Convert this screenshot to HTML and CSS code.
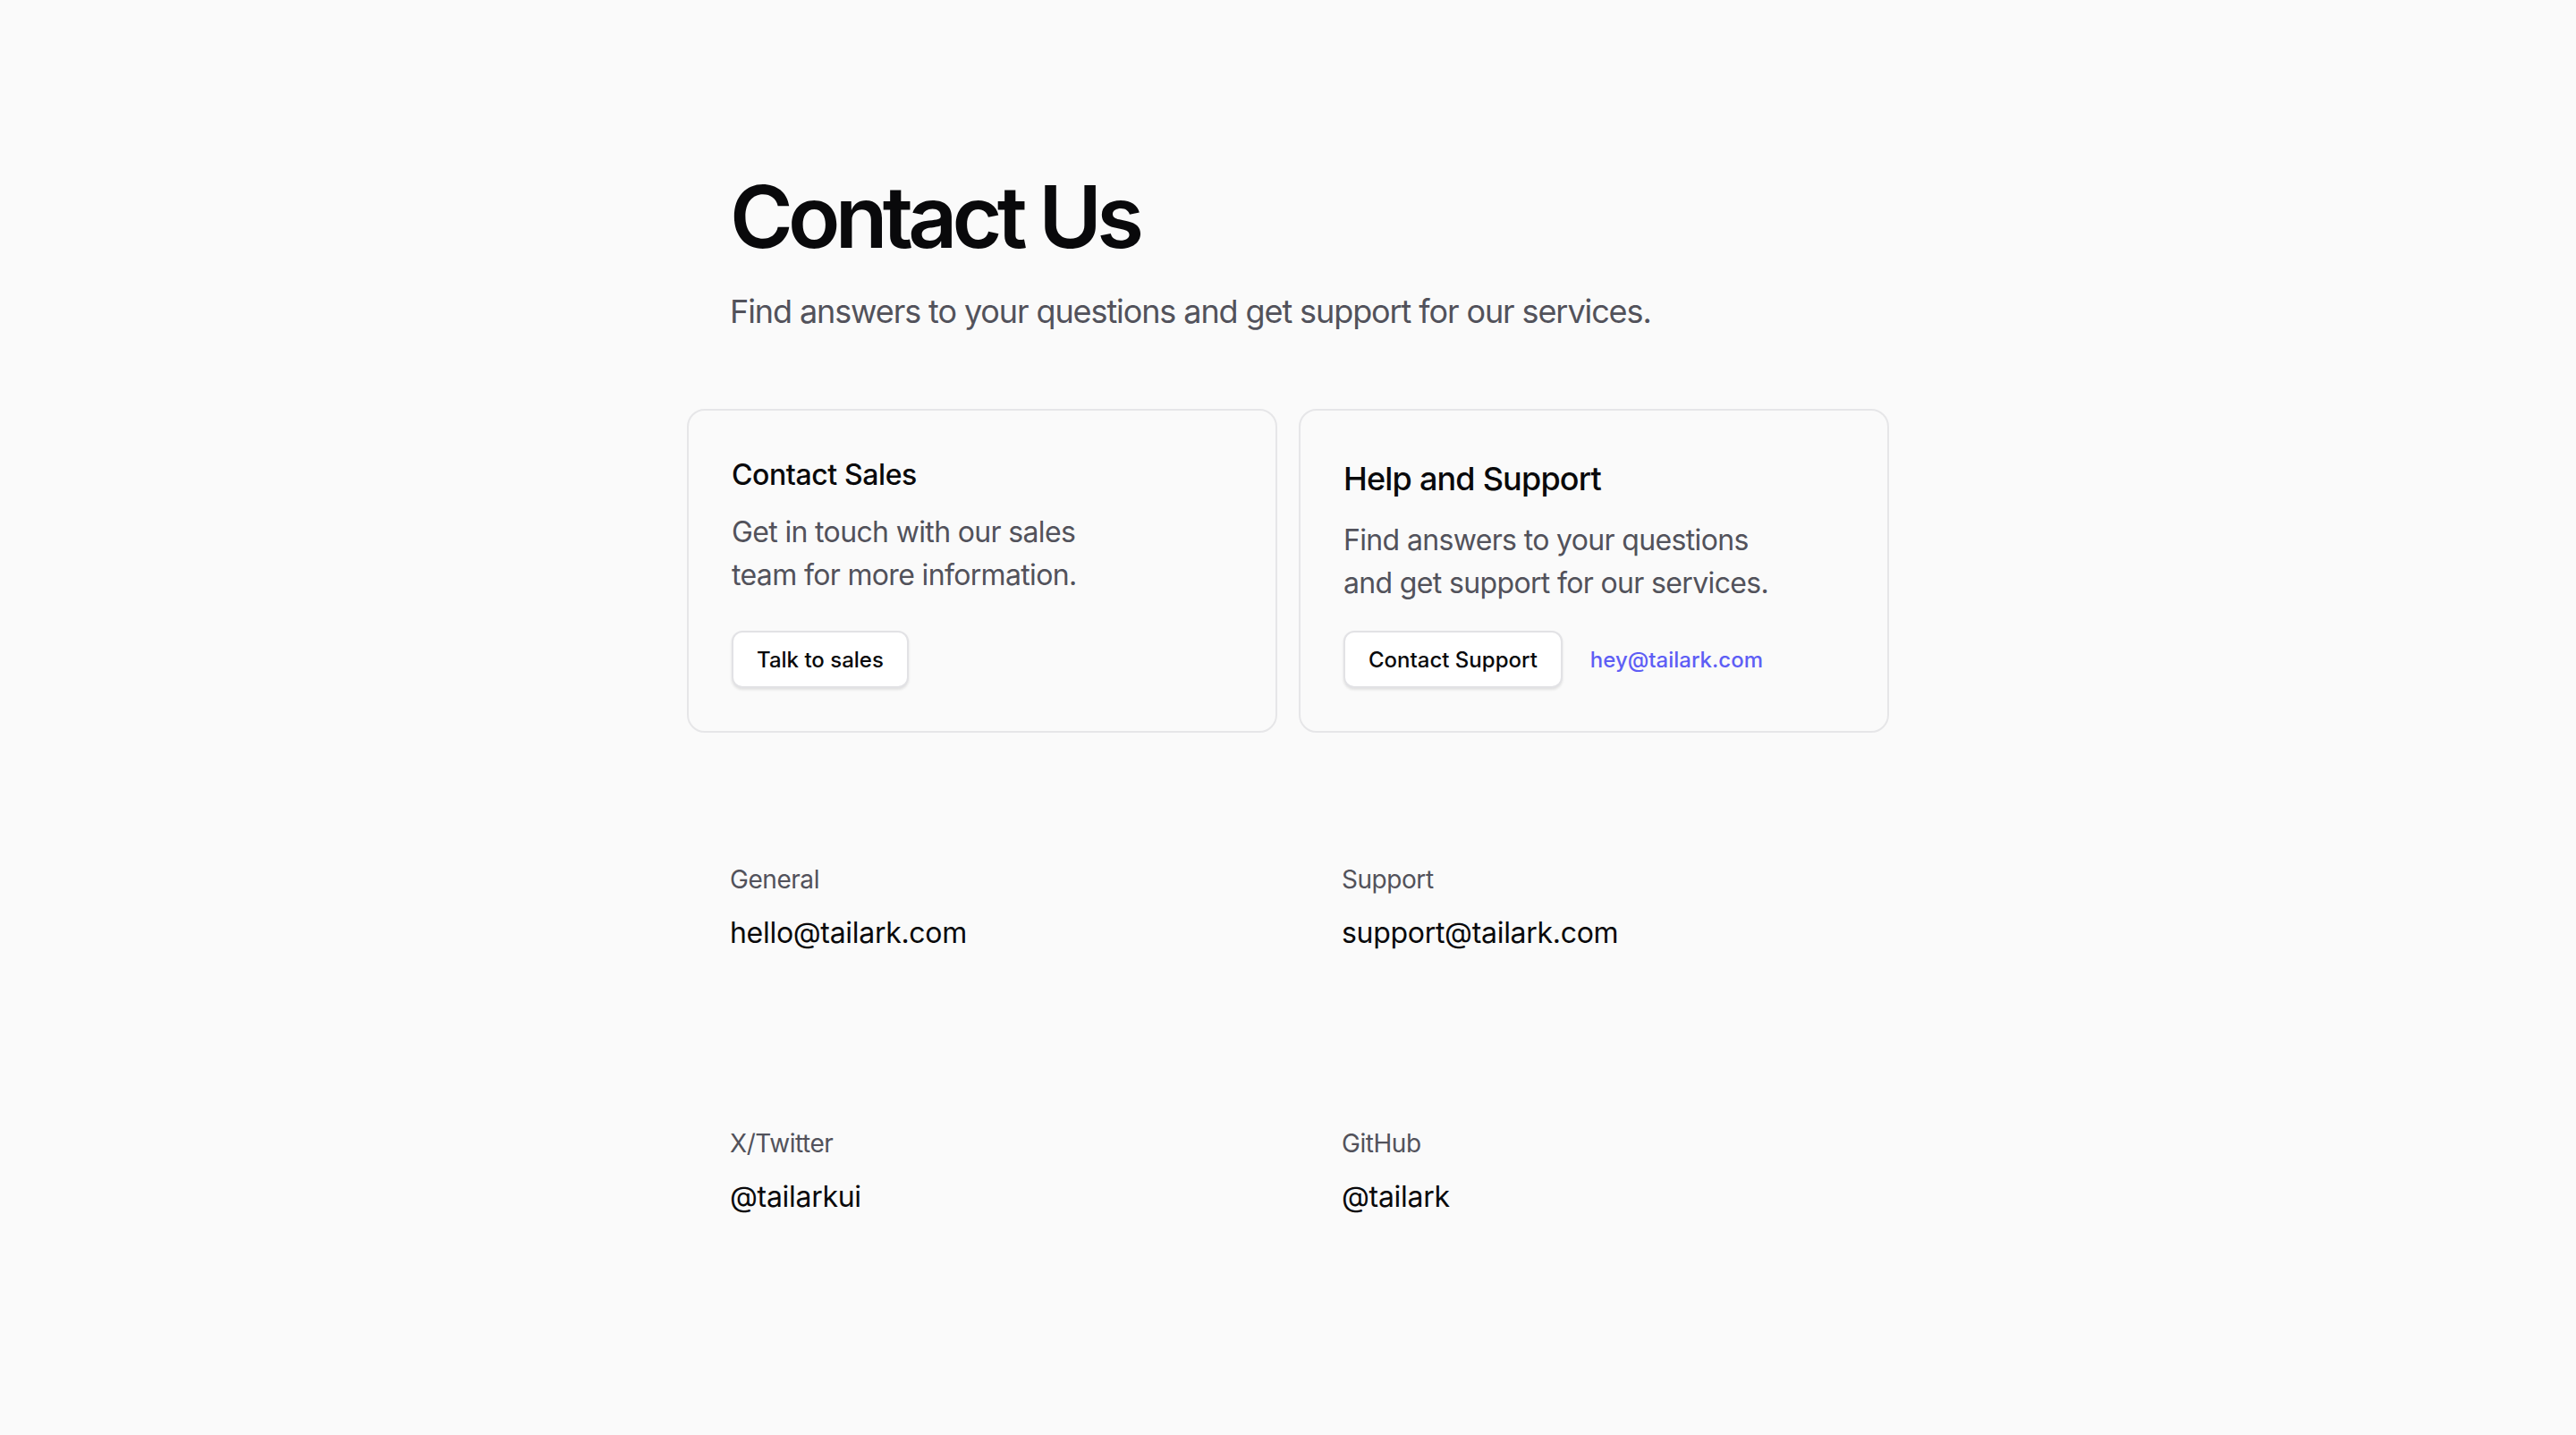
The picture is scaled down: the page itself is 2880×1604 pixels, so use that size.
FILE: index.html
```html
<!DOCTYPE html>
<html lang="en">
<head>
<meta charset="utf-8">
<title>Contact Us</title>
<link rel="stylesheet" href="styles.css">
</head>
<body>
<main class="page">
  <header class="intro">
    <h1 class="title">Contact Us</h1>
    <p class="lead">Find answers to your questions and get support for our services.</p>
  </header>

  <section class="cards">
    <div class="card">
      <h2 class="card-title card-title-sm">Contact Sales</h2>
      <p class="card-desc">Get in touch with our sales team for more information.</p>
      <div class="actions">
        <a class="btn" href="#">Talk to sales</a>
      </div>
    </div>
    <div class="card">
      <h2 class="card-title card-title-lg">Help and Support</h2>
      <p class="card-desc card-desc-lg">Find answers to your questions and get support for our services.</p>
      <div class="actions">
        <a class="btn" href="#">Contact Support</a>
        <a class="link" href="#">hey@tailark.com</a>
      </div>
    </div>
  </section>

  <section class="channels">
    <div class="channel">
      <span class="label">General</span>
      <span class="value">hello@tailark.com</span>
    </div>
    <div class="channel">
      <span class="label">Support</span>
      <span class="value">support@tailark.com</span>
    </div>
    <div class="channel">
      <span class="label">X/Twitter</span>
      <span class="value">@tailarkui</span>
    </div>
    <div class="channel">
      <span class="label">GitHub</span>
      <span class="value">@tailark</span>
    </div>
  </section>
</main>
</body>
</html>
```

FILE: styles.css
```css
* {
  box-sizing: border-box;
}

html, body {
  margin: 0;
  padding: 0;
  background: #fafafa;
}

body {
  font-family: Inter, "Noto Sans", "Liberation Sans", sans-serif;
  color: #09090b;
  -webkit-font-smoothing: antialiased;
}

.page {
  width: 1344px;
  margin: 0 auto;
  padding-top: 194px;
  padding-bottom: 120px;
}

.intro {
  padding: 0 48px;
}

.title {
  margin: 0;
  font-size: 96px;
  line-height: 96px;
  font-weight: 600;
  letter-spacing: -0.06em;
  color: #09090b;
}

.lead {
  margin: 30px 0 0;
  font-size: 36px;
  line-height: 56px;
  letter-spacing: -1.1px;
  color: #52525b;
}

.cards {
  margin-top: 81px;
  display: grid;
  grid-template-columns: 1fr 1fr;
  gap: 24px;
}

.card {
  display: flex;
  flex-direction: column;
  border: 2px solid #e6e6e8;
  border-radius: 20px;
  padding: 48px;
  background: #fafafa;
}

.card-title {
  margin: 0;
  font-weight: 500;
  color: #09090b;
}

.card-title-sm {
  font-size: 32px;
  line-height: 48px;
  letter-spacing: -0.4px;
}

.card-title-lg {
  font-size: 36px;
  line-height: 56px;
  letter-spacing: -0.8px;
}

.card-desc {
  margin: 16px 0 0;
  font-size: 32px;
  line-height: 48px;
  letter-spacing: -0.65px;
  color: #52525b;
  text-wrap: balance;
}

.card-desc-lg {
  margin-top: 17px;
}

.actions {
  margin-top: auto;
  padding-top: 29px;
  display: flex;
  align-items: center;
  gap: 31px;
}

.btn {
  display: inline-flex;
  align-items: center;
  height: 64px;
  padding: 0 26px;
  border: 2px solid #e2e2e5;
  border-radius: 12px;
  background: #ffffff;
  box-shadow: 0 2px 3px rgba(0, 0, 0, 0.1);
  font-size: 24px;
  font-weight: 500;
  color: #09090b;
  text-decoration: none;
}

.link {
  font-size: 24px;
  font-weight: 500;
  color: #5e5ef5;
  text-decoration: none;
}

.channels {
  margin-top: 144px;
  display: grid;
  grid-template-columns: 1fr 1fr;
  column-gap: 24px;
  row-gap: 191px;
}

.channel {
  display: flex;
  flex-direction: column;
  padding: 0 48px;
}

.label {
  font-size: 28px;
  line-height: 40px;
  letter-spacing: -0.45px;
  color: #52525b;
}

.value {
  margin-top: 16px;
  font-size: 32px;
  line-height: 48px;
  letter-spacing: -0.3px;
  color: #09090b;
}
```
